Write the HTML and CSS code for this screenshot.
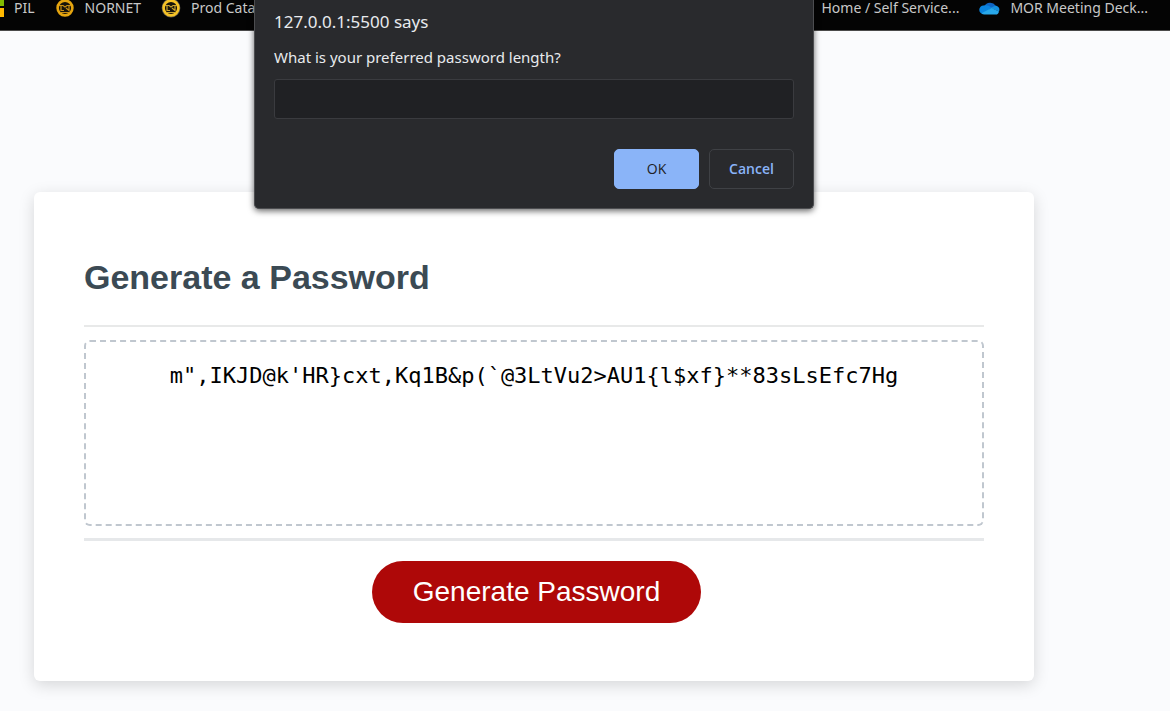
FILE: index.html
```html
<!DOCTYPE html>
<html lang="en">
<head>
<meta charset="utf-8">
<meta name="viewport" content="width=device-width, initial-scale=1">
<title>Password Generator</title>
<link rel="stylesheet" href="styles.css">
</head>
<body>
<nav class="bookmarks" aria-label="Bookmarks">
  <div class="bookmark-group">
    <a class="bookmark" href="#"><svg class="tile" viewBox="0 0 4 20" aria-hidden="true"><path fill="#7fba00" d="M0 0h4v8H0z"/><path fill="#ffb900" d="M0 10h4v9H0z"/></svg>PIL</a>
    <a class="bookmark" href="#"><svg class="icon" viewBox="0 0 20 20" aria-hidden="true"><circle cx="10" cy="10" r="7.4" fill="#17130a" stroke="#e5a50f" stroke-width="2.600"/><path d="M4 7.500h4l2 1.500 2-1.500h4M6 8v4.500h3M11 10l3 2.500V8M6 14.500h8" fill="none" stroke="#c98f14" stroke-width="1.200"/></svg>NORNET</a>
    <a class="bookmark" href="#"><svg class="icon" viewBox="0 0 20 20" aria-hidden="true"><circle cx="10" cy="10" r="9.4" fill="#55524b"/><circle cx="10" cy="10" r="7.4" fill="#17130a" stroke="#f7c325" stroke-width="2.600"/><path d="M4 7.500h4l2 1.500 2-1.500h4M6 8v4.500h3M11 10l3 2.500V8M6 14.500h8" fill="none" stroke="#c9a32e" stroke-width="1.200"/></svg>Prod Cata</a>
  </div>
  <div class="bookmark-group">
    <a class="bookmark" href="#">Home / Self Service...</a>
    <a class="bookmark" href="#"><svg class="cloud" viewBox="0 0 20 14" aria-hidden="true"><path fill="#0f66c4" d="M5 5a6 5 0 0 1 11-.5L12 9z"/><path fill="#0a84de" d="M4 13a4 4 0 0 1 0-8.500q4-1 8 2L5 13z"/><path fill="#1490df" d="M11 7l5-2.500a4.300 4.300 0 0 1 3.500 6z"/><path fill="#28a8ea" d="M2 12.200L12 7l7.500 3.500Q19 13.600 16 13.600H5q-2 0-3-1.400z"/></svg>MOR Meeting Deck...</a>
  </div>
</nav>
<div class="page">
  <dialog class="prompt" open aria-labelledby="prompt-title">
    <form method="dialog">
      <h2 class="prompt-title" id="prompt-title">127.0.0.1:5500 says</h2>
      <label class="prompt-label" for="length">What is your preferred password length?</label>
      <input class="prompt-input" id="length" type="text" autocomplete="off">
      <div class="prompt-actions">
        <button class="prompt-button primary">OK</button>
        <button class="prompt-button">Cancel</button>
      </div>
    </form>
  </dialog>
  <main class="card">
    <h1 class="card-title">Generate a Password</h1>
    <div class="card-body">
      <textarea class="password" readonly aria-label="Your Secure Password">m",IKJD@k'HR}cxt,Kq1B&amp;p(`@3LtVu2&gt;AU1{l$xf}**83sLsEfc7Hg</textarea>
    </div>
    <div class="card-footer">
      <button class="generate" type="button">Generate Password</button>
    </div>
  </main>
</div>
</body>
</html>
```

FILE: styles.css
```css
* {
  box-sizing: border-box;
}

body {
  margin: 0;
  background: #fafbfd;
  font-family: "Liberation Sans", Arial, sans-serif;
  overflow-x: hidden;
}

.bookmarks {
  display: flex;
  justify-content: space-between;
  height: 31px;
  padding-right: 22px;
  background: #040404;
  border-bottom: 1px solid #4a4a4a;
}

.bookmark-group {
  display: flex;
  gap: 20px;
  height: 16px;
  align-items: center;
}

.bookmark {
  display: flex;
  align-items: center;
  gap: 10px;
  color: #c8c8c8;
  font: 14px/20px "Noto Sans", "Open Sans", sans-serif;
  text-decoration: none;
  white-space: nowrap;
}

.tile {
  width: 4px;
  height: 20px;
}

.icon {
  width: 20px;
  height: 20px;
}

.cloud {
  width: 21px;
  height: 14px;
}

.page {
  position: relative;
  padding: 161px 136px 30px 34px;
}

.prompt {
  position: absolute;
  top: -31px;
  left: 0;
  right: 102px;
  width: 560px;
  margin: 0 auto;
  padding: 10px 19px 19px;
  border: 1px solid #4c4d50;
  border-top: 0;
  border-radius: 0 0 5px 5px;
  background: #292a2d;
  color: #e8eaed;
  box-shadow: 0 2px 6px rgba(0, 0, 0, 0.6);
  font-family: "Noto Sans", "Open Sans", sans-serif;
}

.prompt-title {
  margin: 0 0 12px;
  font-size: 17px;
  font-weight: 400;
  line-height: 24px;
}

.prompt-label {
  display: block;
  margin-bottom: 11px;
  font-size: 15px;
  line-height: 22px;
}

.prompt-input {
  display: block;
  width: 100%;
  height: 40px;
  padding: 0 10px;
  border: 1px solid #3a3b3f;
  border-radius: 3px;
  background: #202124;
  color: #e8eaed;
  font: inherit;
  outline: 0;
}

.prompt-actions {
  display: flex;
  justify-content: flex-end;
  gap: 10px;
  margin-top: 30px;
}

.prompt-button {
  width: 85px;
  height: 40px;
  padding: 0;
  border: 1px solid #3f4145;
  border-radius: 5px;
  background: transparent;
  color: #8ab4f8;
  font: 600 14px/20px "Open Sans", "Noto Sans", sans-serif;
  outline: 0;
}

.primary {
  border-color: #8ab4f8;
  background: #8ab4f8;
  color: #202124;
  font-weight: 500;
}

.card {
  padding: 65px 50px 58px;
  border-radius: 6px;
  background: #fff;
  box-shadow: 0 4px 16px rgba(0, 0, 0, 0.15);
}

.card-title {
  margin: 0;
  padding-bottom: 28px;
  color: #3b4a54;
  font-size: 34px;
  line-height: 40px;
}

.card-body {
  padding: 13px 0 12px;
  border-top: 2px solid #e8e9e9;
  border-bottom: 3px solid #e6e8ea;
}

.password {
  display: block;
  width: 100%;
  height: 186px;
  padding: 20px;
  border: 2px dashed #c0c7cf;
  border-radius: 6px;
  background: #fff;
  color: #000;
  font: 22px/28px "DejaVu Sans Mono", "Liberation Mono", monospace;
  text-align: center;
  resize: none;
  overflow: hidden;
}

.card-footer {
  display: flex;
  justify-content: center;
  padding: 20px 0 0 5px;
}

.generate {
  padding: 11px 41px;
  border: 0;
  border-radius: 31px;
  background: #ae0808;
  color: #fff;
  font: 28px/40px "Liberation Sans", Arial, sans-serif;
}
```
